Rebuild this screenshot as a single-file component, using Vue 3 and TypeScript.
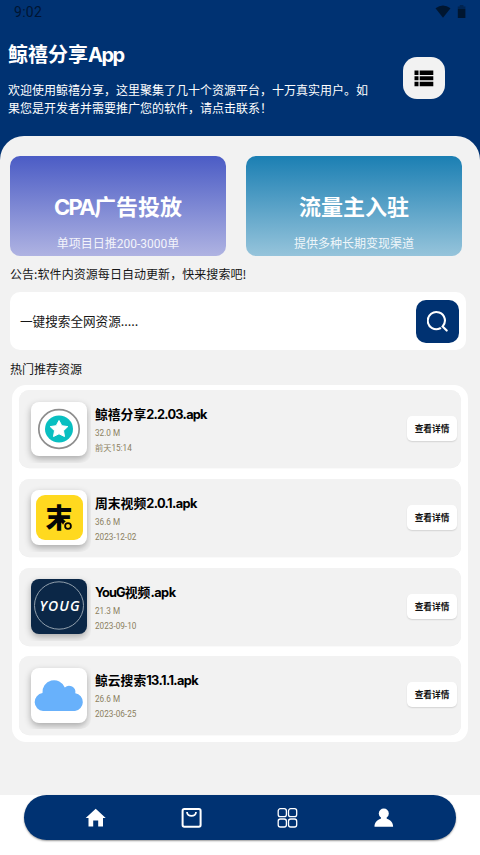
<script setup lang="ts">
interface Part { text: string; latin?: boolean; spacing?: string }
interface Resource { icon: 'star' | 'weekend' | 'youg' | 'cloud'; title: Part[]; size: string; date: string }

const resources: Resource[] = [
  { icon: 'star', title: [{ text: '鲸禧分享' }, { text: '2.2.03.apk', latin: true, spacing: '-0.75px' }], size: '32.0 M', date: '前天15:14' },
  { icon: 'weekend', title: [{ text: '周末视频' }, { text: '2.0.1.apk', latin: true, spacing: '-0.6px' }], size: '36.6 M', date: '2023-12-02' },
  { icon: 'youg', title: [{ text: 'YouG', latin: true, spacing: '-0.9px' }, { text: '视频' }, { text: '.apk', latin: true, spacing: '-0.5px' }], size: '21.3 M', date: '2023-09-10' },
  { icon: 'cloud', title: [{ text: '鲸云搜索' }, { text: '13.1.1.apk', latin: true, spacing: '-0.6px' }], size: '26.6 M', date: '2023-06-25' },
]
</script>

<template>
  <div class="screen">
    <header class="header">
      <div class="status">
        <span class="clock">9:02</span>
        <svg class="status-icons" width="32" height="14" viewBox="0 0 32 14">
          <path d="M1.500 3.200Q9-2.400 16.500 3.200L9 12.800Z" />
          <path opacity=".5" d="M23.800 1.500h2V0h3.600v1.500h2V4h-7.600Z" />
          <path d="M23.800 4h7.600v9h-7.600Z" />
        </svg>
      </div>
      <div class="intro">
        <div class="intro-text">
          <h1>鲸禧分享<span class="latin">App</span></h1>
          <p>欢迎使用鲸禧分享，这里聚集了几十个资源平台，十万真实用户。如果您是开发者并需要推广您的软件，请点击联系！</p>
        </div>
        <button class="menu" aria-label="菜单">
          <svg width="20" height="17" viewBox="0 0 20 17">
            <path d="M.5.5h4V5h-4ZM5.700.5h13.600V5H5.700ZM.5 6.300h4v4h-4ZM5.700 6.300h13.600v4H5.700ZM.5 11.800h4v4.500h-4ZM5.700 11.800h13.600v4.500H5.700Z" />
          </svg>
        </button>
      </div>
    </header>

    <main class="panel">
      <section class="cards">
        <div class="card violet">
          <strong><span class="latin">CPA</span>广告投放</strong>
          <span class="card-sub">单项目日推200-3000单</span>
        </div>
        <div class="card teal">
          <strong>流量主入驻</strong>
          <span class="card-sub">提供多种长期变现渠道</span>
        </div>
      </section>
      <p class="notice">公告:软件内资源每日自动更新，快来搜索吧!</p>
      <div class="search">
        <span>一键搜索全网资源.....</span>
        <button class="search-btn" aria-label="搜索">
          <svg width="22" height="22" viewBox="0 0 22 22" fill="none" stroke="#fff" stroke-width="2.100" stroke-linecap="round">
            <path d="M13.200 18.300A8.600 8.600 0 1 1 15.600 16.500L19.700 20.600" />
          </svg>
        </button>
      </div>
      <h2>热门推荐资源</h2>
      <section class="list">
        <article v-for="r in resources" :key="r.date" class="item">
          <div class="icon-frame">
            <div class="app-icon" :class="r.icon">
              <svg v-if="r.icon === 'star'" width="56" height="54" viewBox="0 0 56 54">
                <ellipse cx="28" cy="27" rx="20.200" ry="19.300" fill="none" stroke="#8d8d8d" stroke-width="1.700" />
                <ellipse cx="28" cy="27" rx="14" ry="13.500" fill="#09bfc1" />
                <path d="M28 18.500l2.800 5.200 6 .9-4.300 4.100 1 5.800-5.500-2.700-5.500 2.700 1-5.800-4.300-4.100 6-.9Z" fill="#fff" stroke="#fff" stroke-linejoin="round" />
              </svg>
              <svg v-else-if="r.icon === 'weekend'" width="56" height="54" viewBox="0 0 56 54">
                <rect x="5" y="5" width="47" height="45" rx="9" fill="#ffd91f" />
                <text x="14.500" y="37.500" class="weekend-text">末</text>
                <circle cx="37" cy="36" r="5" fill="#ffd91f" />
                <circle cx="37" cy="36" r="2.900" fill="#ffd91f" stroke="#050505" stroke-width="1.800" />
              </svg>
              <svg v-else-if="r.icon === 'youg'" width="56" height="54" viewBox="0 0 56 54">
                <ellipse cx="28" cy="26.500" rx="24.500" ry="23.700" fill="none" stroke="#92a0ad" stroke-width="1" />
                <text x="8.500" y="31.500" class="youg-text" textLength="40">YOUG</text>
              </svg>
              <svg v-else width="56" height="54" viewBox="0 0 56 54">
                <path d="M12 43A9 9 0 0 1 11.500 25.100A11.600 11.600 0 0 1 33.800 19.500A6.300 6.300 0 0 1 44.300 25.200A9 9 0 0 1 44 43Z" fill="#68b1fb" />
              </svg>
            </div>
          </div>
          <div class="info">
            <h3><span v-for="p in r.title" :key="p.text" :class="{ latin: p.latin }" :style="{ letterSpacing: p.spacing }">{{ p.text }}</span></h3>
            <span class="meta">{{ r.size }}</span>
            <span class="meta">{{ r.date }}</span>
          </div>
          <button class="detail">查看详情</button>
        </article>
      </section>
    </main>

    <footer class="footer">
      <nav class="nav">
        <svg width="22" height="22" viewBox="0 0 22 22" fill="#fff">
          <path d="M10.700 1.700L20.700 11.100h-2.700v8.500h-4.800v-6H8.200v6H3.500v-8.500H.7Z" />
        </svg>
        <svg width="22" height="22" viewBox="0 0 22 22" fill="none" stroke="#fff">
          <rect x="1.600" y="2" width="18" height="17.800" rx="1.700" stroke-width="2" />
          <path d="M6 5c0 5.200 9 5.200 9 0" stroke-width="1.800" />
        </svg>
        <svg width="22" height="22" viewBox="0 0 22 22" fill="none" stroke="#fff" stroke-width="1.300">
          <rect x="1.200" y="1.700" width="8.200" height="8" rx="2.200" />
          <rect x="11.500" y="1.700" width="8.200" height="8" rx="2.200" />
          <rect x="1.200" y="12" width="8.200" height="8" rx="2.200" />
          <rect x="11.500" y="12" width="8.200" height="8" rx="2.200" />
        </svg>
        <svg width="22" height="22" viewBox="0 0 22 22" fill="#fff">
          <circle cx="10.800" cy="6.500" r="5" />
          <path d="M8.300 9h5l.5 2.700c4 1.200 6.300 4 6.300 8H1.500c0-4 2.300-6.800 6.300-8Z" />
        </svg>
      </nav>
    </footer>
  </div>
</template>

<style>
body { margin: 0; background: #fff; }
</style>

<style scoped>
* { box-sizing: border-box; }
h1, h2, h3, p { margin: 0; }
button { border: 0; padding: 0; font: inherit; }
svg { display: block; flex: none; }
.screen {
  width: 480px; height: 855px; overflow: hidden; display: flex; flex-direction: column;
  background: #003272; color: #161616; font: 12px/18px "Noto Sans CJK SC", sans-serif;
}
.header { height: 135.500px; flex: none; }
.status { height: 25px; padding: 0 14px; display: flex; justify-content: space-between; align-items: center; }
.clock { font: 14px/25px Roboto, sans-serif; letter-spacing: .3px; color: #001533; }
.status-icons { fill: #001630; margin-top: -1px; }
.intro { display: flex; padding: 16px 35px 0 8px; justify-content: space-between; color: #fff; }
.intro-text { width: 366px; }
h1 { font-size: 20px; line-height: 26px; font-weight: 700; }
.latin { font-family: Inter, sans-serif; }
h1 .latin { letter-spacing: -1.500px; }
.intro p { margin-top: 13px; }
.menu { width: 42px; height: 42px; margin-top: 16.300px; border-radius: 14px; background: #f2f2f2; display: grid; place-items: center; }
.panel { height: 659.500px; flex: none; background: #f2f2f2; border-radius: 24px 24px 0 0; padding: 20px 12px 0 10px; }
.cards { display: flex; gap: 20px; }
.card { width: 216px; height: 100.500px; border-radius: 10px; color: #fff; display: flex; flex-direction: column; align-items: center; flex: none; }
.violet { background: linear-gradient(#4b5cc5, #afb3e2); }
.teal { background: linear-gradient(#1b7fb3, #96c4db); }
.card strong { font-size: 22px; line-height: 30px; height: 30px; margin-top: 34px; font-weight: 700; }
.card strong .latin { letter-spacing: -1.700px; }
.card-sub { margin-top: 15px; opacity: .88; line-height: 18px; height: 18px; font-family: Roboto, "Noto Sans CJK SC", sans-serif; }
.notice { margin-top: 9px; letter-spacing: .06px; }
.search { margin-top: 9px; width: 456px; height: 58px; border-radius: 10px; background: #fff; padding: 0 7px 0 10px; display: flex; align-items: center; justify-content: space-between; font-size: 12.600px; }
.search-btn { width: 43px; height: 43px; border-radius: 10px; background: #003272; display: grid; place-items: center; }
h2 { margin-top: 10px; font-size: 12px; line-height: 18px; font-weight: 400; }
.list { margin: 7px 0 0 2px; width: 456px; height: 357px; border-radius: 14px; background: #fff; padding: 5px 7px; display: flex; flex-direction: column; gap: 10.600px; }
.item { height: 78.200px; flex: none; border-radius: 10px; background: #f2f2f2; display: flex; box-shadow: 0 .3px .6px rgba(0, 0, 0, .08); }
.icon-frame { width: 72px; height: 73px; padding: 11.700px 4px 7px 12px; overflow: hidden; border-radius: 10px; }
.app-icon { width: 56px; height: 54.500px; border-radius: 8px; background: #fff; box-shadow: 0 3px 7px rgba(0, 0, 0, .3); overflow: hidden; }
.youg { background: #0b2747; }
.weekend-text { font: 900 27px "Noto Sans CJK SC", sans-serif; fill: #050505; }
.youg-text { font: italic 600 14px "Open Sans", sans-serif; fill: #fff; }
.info { display: flex; flex-direction: column; padding-left: 4px; flex: 1; }
h3 { font-size: 12.800px; line-height: 20px; font-weight: 700; margin: 14px 0 1px; color: #000; white-space: nowrap; }
.meta { font: 8.200px/15px Roboto, "Noto Sans CJK SC", sans-serif; color: #8b8060; }
.detail { width: 50px; height: 25px; margin: 26px 4px 0 0; border-radius: 5px; background: #fff; color: #111; font-size: 8.700px; font-weight: 700; line-height: 25px; box-shadow: 0 1px 1.500px rgba(0, 0, 0, .13); }
.footer { flex: 1; background: #fff; padding: 0 24px; }
.nav { margin-top: .3px; height: 45px; border-radius: 23px; background: #003272; display: flex; justify-content: space-between; padding: 0 61px; align-items: center; box-shadow: 0 1px 2px rgba(0, 0, 0, .4); }
</style>
